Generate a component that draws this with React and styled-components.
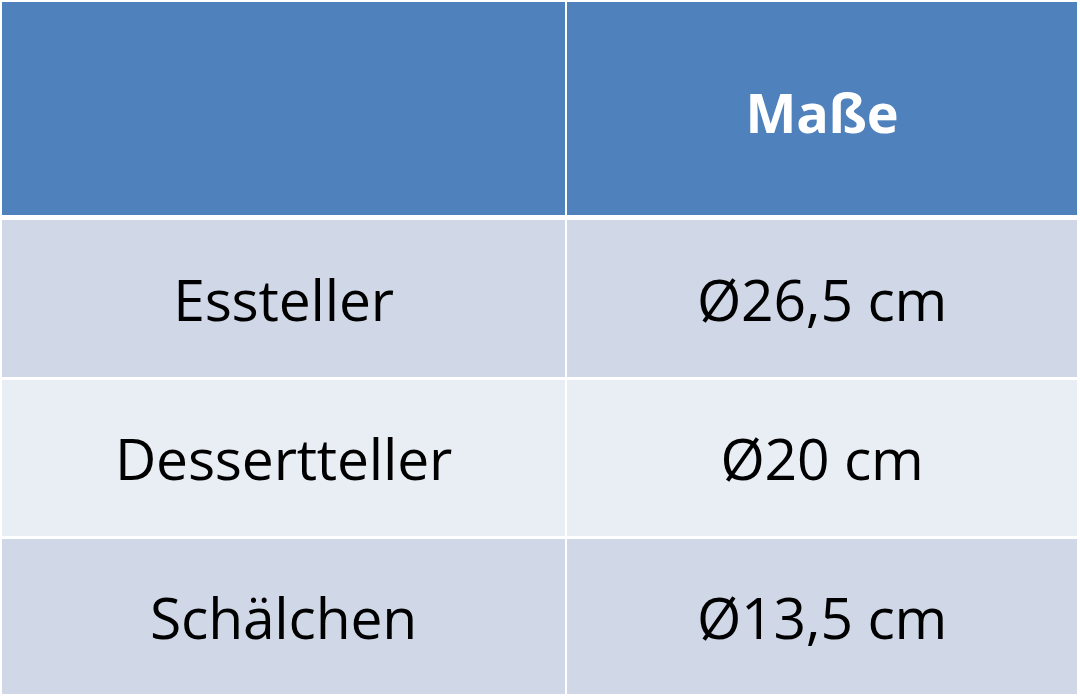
import React from "react";
import styled, { createGlobalStyle } from "styled-components";

const GlobalStyle = createGlobalStyle`
    html, body {
        margin: 0;
        padding: 0;
        background: #ffffff;
    }
    body {
        font-family: "Open Sans", "Liberation Sans", sans-serif;
    }
`;

const Table = styled.div`
    width: 1075px;
    margin: 2px 0 0 2px;
    background: #ffffff;
    display: flex;
    flex-direction: column;
`;

const Row = styled.div`
    display: grid;
    grid-template-columns: 563px 510px;
    column-gap: 2px;
    height: ${(props) => props.height}px;
    margin-top: ${(props) => props.gap || 0}px;
`;

const Cell = styled.div`
    display: flex;
    align-items: center;
    justify-content: center;
    padding-top: ${(props) => (props.head ? 6 : 0)}px;
    background: ${(props) => props.bg};
    color: ${(props) => (props.head ? "#ffffff" : "#000000")};
    font-weight: ${(props) => (props.head ? 700 : 400)};
    font-size: ${(props) => (props.head ? 54 : 57)}px;
    letter-spacing: -0.2px;
`;

const rows = [
    { name: "Essteller", size: "Ø26,5 cm", bg: "#d0d8e8", height: 157, gap: 5 },
    { name: "Dessertteller", size: "Ø20 cm", bg: "#e9edf4", height: 156, gap: 3 },
    { name: "Schälchen", size: "Ø13,5 cm", bg: "#d0d8e8", height: 155, gap: 3 },
];

const App = () => {
    return (
        <>
            <GlobalStyle />
            <Table>
                <Row height={213}>
                    <Cell head bg="#4f81bd"></Cell>
                    <Cell head bg="#4f81bd">Maße</Cell>
                </Row>
                {rows.map((item, i) => (
                    <Row key={i} height={item.height} gap={item.gap}>
                        <Cell bg={item.bg}>{item.name}</Cell>
                        <Cell bg={item.bg}>{item.size}</Cell>
                    </Row>
                ))}
            </Table>
        </>
    );
};

export default App;
